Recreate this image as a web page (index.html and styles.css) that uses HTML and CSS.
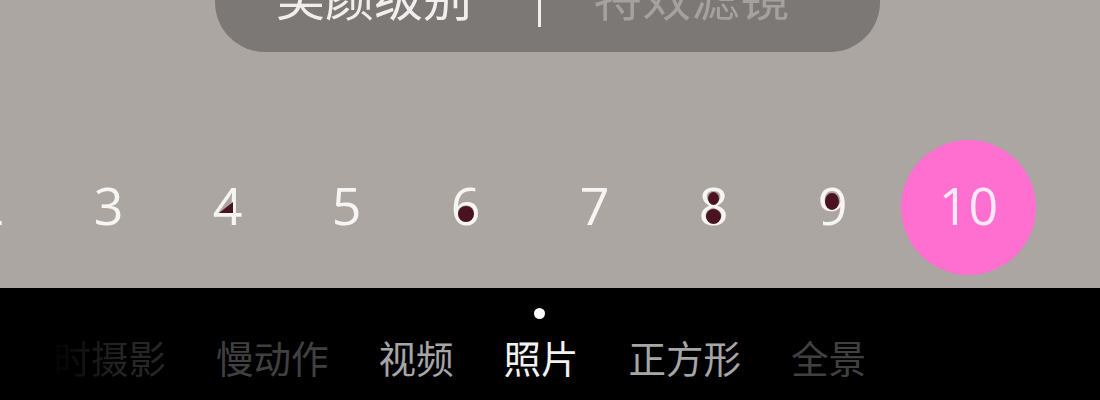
FILE: index.html
```html
<!DOCTYPE html>
<html lang="zh-CN">
<head>
<meta charset="utf-8">
<title>Camera</title>
<link rel="stylesheet" href="styles.css">
</head>
<body>
<div class="screen">
  <div class="viewfinder">
    <div class="pill">
      <span class="pill-item active">美颜级别</span>
      <span class="pill-divider"></span>
      <span class="pill-item">特效滤镜</span>
    </div>
    <div class="scale">
      <span class="num">2</span>
      <span class="num">3</span>
      <span class="num">4<i class="mark mark-4"></i></span>
      <span class="num">5</span>
      <span class="num">6<i class="mark mark-6"></i></span>
      <span class="num num-7">7</span>
      <span class="num">8<i class="mark mark-8a"></i><i class="mark mark-8b"></i></span>
      <span class="num">9<i class="mark mark-9"></i></span>
      <span class="num num-active">10</span>
    </div>
  </div>
  <div class="modes">
    <span class="mode-dot"></span>
    <div class="mode-tabs">
      <span class="mode mode-far">延时摄影</span>
      <span class="mode mode-dim">慢动作</span>
      <span class="mode mode-near">视频</span>
      <span class="mode mode-current">照片</span>
      <span class="mode mode-near">正方形</span>
      <span class="mode mode-dim">全景</span>
    </div>
  </div>
</div>
</body>
</html>
```

FILE: styles.css
```css
html, body {
  margin: 0;
  padding: 0;
  background: #000;
}

.screen {
  width: 1100px;
  height: 400px;
  overflow: hidden;
  display: flex;
  flex-direction: column;
}

.viewfinder {
  height: 288px;
  background: #aca6a2;
  display: flex;
  flex-direction: column;
  overflow: hidden;
}

.pill {
  margin-top: -50px;
  margin-left: 215px;
  width: 665px;
  height: 102px;
  box-sizing: border-box;
  border-radius: 50px;
  background: #7b7876;
  display: flex;
  align-items: center;
  padding-left: 61px;
  padding-bottom: 14px;
  font-family: "Noto Sans CJK SC", "Noto Sans", sans-serif;
  font-size: 49px;
  line-height: 1;
}

.pill-item {
  color: #a4a19e;
  white-space: nowrap;
}

.pill-item.active {
  color: #f1efee;
}

.pill-divider {
  width: 3px;
  height: 66px;
  margin: 0 52px 0 66px;
  background: #f1efee;
}

.scale {
  margin-top: 88px;
  margin-left: -70px;
  height: 135px;
  display: flex;
  align-items: flex-start;
  font-family: "Open Sans", "Noto Sans", sans-serif;
  font-size: 52px;
  color: #f7f5f4;
}

.num {
  position: relative;
  width: 119px;
  flex: none;
  text-align: center;
  line-height: 129px;
}

.num-7 {
  margin-left: 10px;
}

.num-active {
  width: 135px;
  height: 135px;
  margin-left: 9px;
  border-radius: 50%;
  background: #ff6fd0;
  color: #fde8f6;
}

.mark {
  position: absolute;
  background: #4b1222;
}

.mark-4 {
  left: 51px;
  top: 62px;
  width: 14px;
  height: 11px;
  clip-path: polygon(100% 0, 100% 100%, 0 100%);
}

.mark-6 {
  left: 52px;
  top: 66px;
  width: 16px;
  height: 16px;
  border-radius: 50%;
}

.mark-8a {
  left: 54px;
  top: 52px;
  width: 11px;
  height: 13px;
  border-radius: 50%;
}

.mark-8b {
  left: 52px;
  top: 69px;
  width: 15px;
  height: 15px;
  border-radius: 50%;
}

.mark-9 {
  left: 52px;
  top: 53px;
  width: 14px;
  height: 17px;
  border-radius: 50%;
}

.modes {
  flex: 1;
  background: #000;
  display: flex;
  flex-direction: column;
}

.mode-dot {
  width: 11px;
  height: 11px;
  margin: 20px 0 0 534px;
  border-radius: 50%;
  background: #fff;
}

.mode-tabs {
  margin-top: 18px;
  padding-left: 16px;
  display: flex;
  gap: 50px;
  font-family: "Noto Sans CJK SC", "Noto Sans", sans-serif;
  font-size: 37.5px;
  line-height: 40px;
  white-space: nowrap;
}

.mode-far {
  color: #262626;
  -webkit-mask-image: linear-gradient(to right, transparent 22%, #000 72%);
  mask-image: linear-gradient(to right, transparent 22%, #000 72%);
}

.mode-dim {
  color: #404040;
}

.mode-near {
  color: #a6a6a6;
}

.mode-current {
  color: #f2f2f2;
}
```
